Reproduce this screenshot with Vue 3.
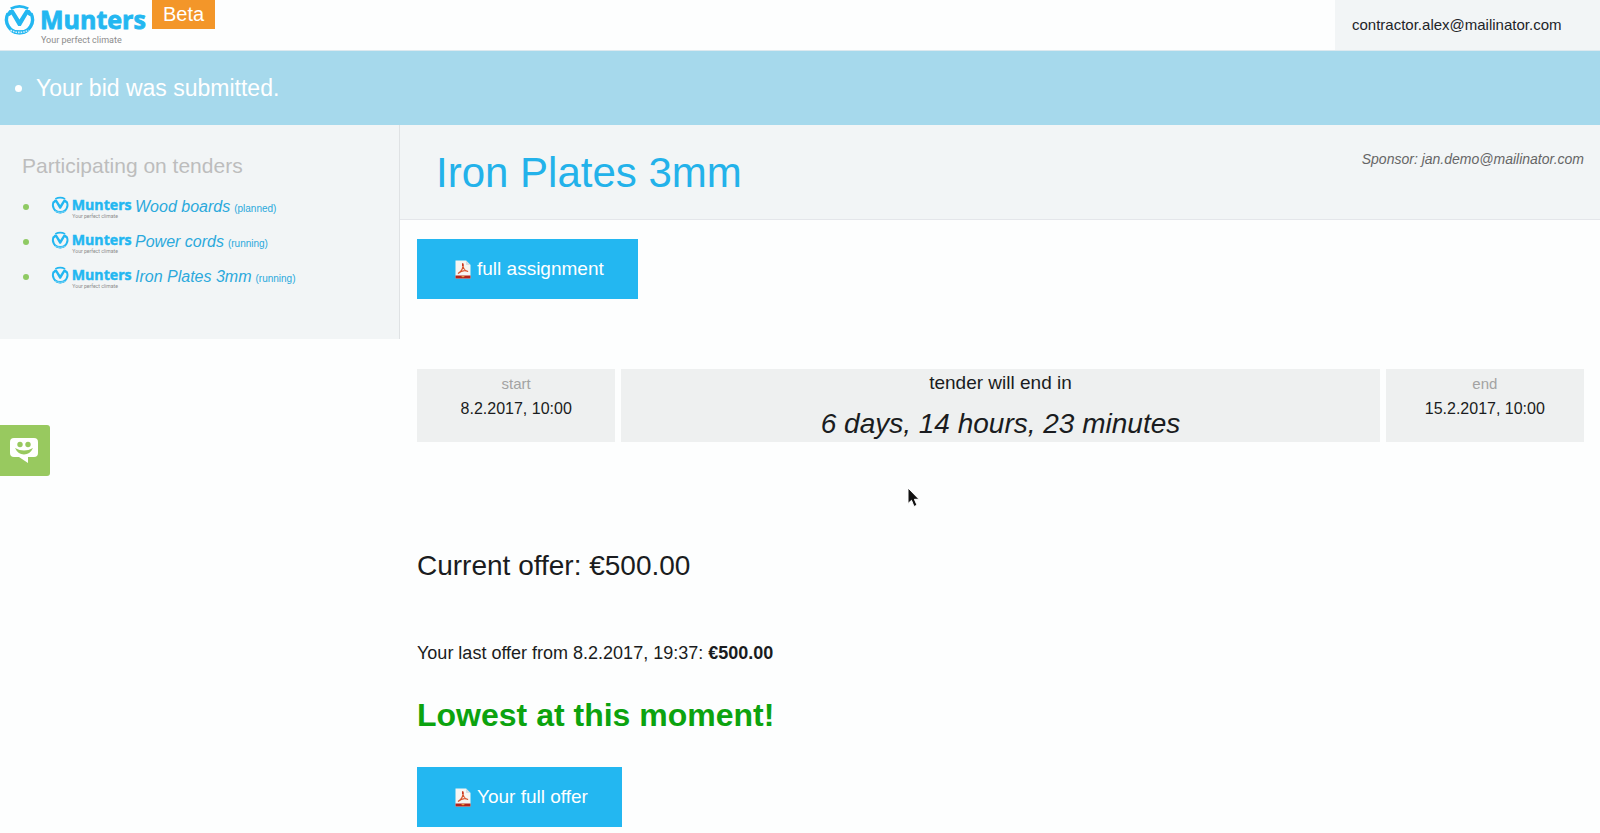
<script setup>
import { h } from 'vue'

const tenders = [
  { name: 'Wood boards', state: 'planned' },
  { name: 'Power cords', state: 'running' },
  { name: 'Iron Plates 3mm', state: 'running' },
]

const MuntersLogo = () =>
  h('svg', { viewBox: '0 0 148 46', role: 'img', 'aria-label': 'Munters' }, [
    h('path', { d: 'M8 13.500A13 13 0 1 0 31 13.500', fill: 'none', stroke: '#23b7f1', 'stroke-width': 3.4 }),
    h('path', { d: 'M8 27.500Q19.500 33 31 27.500L28 32Q19.500 37 11 32Z', fill: '#23b7f1' }),
    h('path', { d: 'M6 14.500L9.500 10H13.500L19.500 19.500L25.500 10H29.500L33 14.500L29.500 16L27.500 14.500L20.800 26H18.200L11.500 14.500L9.500 16Z', fill: '#23b7f1' }),
    h('path', { d: 'M10.500 30.300Q19.500 34.500 28.500 30.300', fill: 'none', stroke: '#d5f0fb', 'stroke-width': 1.6, 'stroke-dasharray': '1.6 1' }),
    h('path', { d: 'M10.800 8.800Q19.500 4 28.200 8.800', fill: 'none', stroke: '#23b7f1', 'stroke-width': 2.8 }),
    h('text', { x: 40, y: 29, fill: '#23b7f1', stroke: '#23b7f1', 'stroke-width': 0.8, 'font-family': 'Open Sans, sans-serif', 'font-weight': 700, 'font-size': 25 }, 'Munters'),
    h('text', { x: 41, y: 43, fill: '#8c8c8c', 'font-family': 'Roboto, sans-serif', 'font-size': 9 }, 'Your perfect climate'),
  ])

const PdfIcon = () =>
  h('svg', { viewBox: '0 0 16 19', 'aria-hidden': 'true' }, [
    h('path', { d: 'M0.500 0.500H11L15.500 5V18.500H0.500Z', fill: '#f7f5f2' }),
    h('path', { d: 'M11 0.500V5H15.500Z', fill: '#d5dde2' }),
    h('path', { d: 'M0.500 15.500H15.500V18.500H0.500Z', fill: '#b5231b' }),
    h('path', { d: 'M7.500 3.500C9.500 7 6 12 3 13.500C6 11 10 10 13 11.500C10 11.500 8 7.500 7.500 3.500Z', fill: 'none', stroke: '#d9532c', 'stroke-width': 1.2 }),
    h('path', { d: 'M7 3.500H8.500V6H7Z', fill: '#c8321f' }),
    h('path', { d: 'M6 16H10L8 17.500Z', fill: '#e8a33d' }),
  ])
</script>

<template>
  <div class="page">
    <header class="topbar">
      <a href="#" class="brand"><MuntersLogo class="brand-logo" /></a>
      <span class="beta">Beta</span>
      <a href="#" class="account">contractor.alex@mailinator.com</a>
    </header>

    <ul class="flash" role="status">
      <li>Your bid was submitted.</li>
    </ul>

    <div class="columns">
      <aside class="sidebar">
        <h2>Participating on tenders</h2>
        <ul>
          <li v-for="t in tenders" :key="t.name">
            <a href="#">
              <MuntersLogo class="mini-logo" />
              <span>
                <em>{{ t.name }}</em>
                <small>({{ t.state }})</small>
              </span>
            </a>
          </li>
        </ul>
      </aside>

      <main>
        <div class="title-bar">
          <h1>Iron Plates 3mm</h1>
          <p class="sponsor">Sponsor: jan.demo@mailinator.com</p>
        </div>
        <div class="content">
          <a href="#" class="button"><PdfIcon class="pdf" />full assignment</a>

          <section class="timeline">
            <div class="edge">
              <span class="label">start</span>
              <span>8.2.2017, 10:00</span>
            </div>
            <div class="remaining">
              <span>tender will end in</span>
              <em>6 days, 14 hours, 23 minutes</em>
            </div>
            <div class="edge">
              <span class="label">end</span>
              <span>15.2.2017, 10:00</span>
            </div>
          </section>

          <p class="current">Current offer: €500.00</p>
          <p class="last">Your last offer from 8.2.2017, 19:37: <strong>€500.00</strong></p>
          <p class="lowest">Lowest at this moment!</p>
          <a href="#" class="button"><PdfIcon class="pdf" />Your full offer</a>
        </div>
      </main>
    </div>

    <button class="chat" type="button" aria-label="Feedback">
      <svg viewBox="0 0 30 27" aria-hidden="true">
        <path d="M5 1H25Q29 1 29 5V16Q29 20 25 20H19V26L10 20H5Q1 20 1 16V5Q1 1 5 1Z" fill="#fff" />
        <circle cx="11" cy="7.500" r="2.700" fill="#98c95f" />
        <circle cx="19" cy="7.500" r="2.700" fill="#98c95f" />
        <path d="M6 11Q15 16 24 11Q21 17.500 15 17.500Q9 17.500 6 11Z" fill="#98c95f" />
      </svg>
    </button>

    <svg class="pointer" viewBox="0 0 14 21" aria-hidden="true">
      <path d="M1 1V16.500L4.500 13.300L7 19.500L10 18.200L7.400 12.300H12Z" fill="#111" stroke="#fff" stroke-width="1" />
    </svg>
  </div>
</template>

<style>
body {
  background: #fdfefe;
}
</style>

<style scoped>
.page {
  position: relative;
  font-family: "Liberation Sans", Arial, sans-serif;
  color: #1a1c20;
}
h1, h2, p, ul {
  margin: 0;
  padding: 0;
  font-weight: 400;
}
a {
  text-decoration: none;
}
.topbar {
  display: flex;
  align-items: flex-start;
  height: 50px;
  border-bottom: 1px solid #dde9ef;
}
.brand-logo {
  display: block;
  width: 148px;
  height: 46px;
}
.beta {
  margin-left: 4px;
  padding: 0 11px;
  font-size: 20px;
  line-height: 29px;
  color: #fff;
  background: #f39629;
}
.account {
  margin-left: auto;
  width: 248px;
  padding-left: 17px;
  font-size: 15px;
  line-height: 50px;
  color: #222428;
  background: #f2f5f6;
}
.flash {
  padding: 0 36px;
  font-size: 23px;
  line-height: 74px;
  color: #fff;
  background: #a6d9ec;
}
.columns {
  display: grid;
  grid-template-columns: 1fr 3fr;
  align-items: start;
}
.sidebar {
  padding: 28px 22px 45px;
  background: #f2f5f6;
  border-right: 1px solid #dfe2e4;
}
.sidebar h2 {
  margin-bottom: 10px;
  font-size: 21px;
  line-height: 26px;
  color: #bdbdbd;
}
.sidebar ul {
  list-style: none;
}
.sidebar li {
  display: flex;
  align-items: center;
  height: 35px;
}
.sidebar li::before {
  content: "";
  width: 6px;
  height: 6px;
  margin: 0 20px 0 1px;
  border-radius: 50%;
  background: #8fca63;
}
.sidebar li a {
  display: flex;
  align-items: center;
  gap: 2px;
  color: #2ba9dc;
}
.mini-logo {
  width: 84px;
  height: 26px;
}
.sidebar em {
  font-size: 16px;
}
.sidebar small {
  margin-left: 4px;
  font-size: 10px;
}
.title-bar {
  display: flex;
  justify-content: space-between;
  align-items: flex-start;
  padding: 24px 16px 22px 36px;
  background: #f2f5f6;
  border-bottom: 1px solid #e4e6ea;
}
h1 {
  font-size: 42px;
  line-height: 48px;
  color: #23b2ea;
}
.sponsor {
  font-size: 14px;
  line-height: 20px;
  font-style: italic;
  color: #666;
}
.content {
  padding: 19px 16px 6px 17px;
}
.button {
  display: flex;
  align-items: center;
  width: fit-content;
  height: 60px;
  padding: 0 34px 0 38px;
  font-size: 19px;
  color: #fff;
  background: #23b7f1;
}
.pdf {
  width: 16px;
  height: 19px;
  margin-right: 6px;
}
.timeline {
  display: flex;
  gap: 6px;
  margin: 70px 0 104px;
  text-align: center;
}
.timeline > div {
  display: flex;
  flex-direction: column;
  height: 73px;
  background: #eef0f0;
}
.edge {
  width: 17%;
  font-size: 16px;
  line-height: 20px;
  padding-top: 5px;
  gap: 5px;
  box-sizing: border-box;
}
.label {
  font-size: 15px;
  color: #a3a3a3;
}
.remaining {
  flex: 1;
  font-size: 19px;
  line-height: 28px;
}
.remaining em {
  font-size: 28px;
  line-height: 54px;
}
.current {
  margin-bottom: 54px;
  font-size: 28px;
  line-height: 40px;
}
.last {
  margin-bottom: 29px;
  font-size: 18px;
  line-height: 26px;
}
.lowest {
  margin-bottom: 32px;
  font-size: 32px;
  line-height: 40px;
  font-weight: 700;
  color: #0ca30f;
}
.chat {
  position: fixed;
  left: 0;
  top: 425px;
  display: flex;
  align-items: center;
  justify-content: center;
  width: 50px;
  height: 51px;
  padding: 0 2px 0 0;
  border: 0;
  border-radius: 0 3px 3px 0;
  background: #98c95f;
}
.chat svg {
  width: 30px;
  height: 27px;
}
.pointer {
  position: absolute;
  left: 907px;
  top: 487px;
  width: 14px;
  height: 21px;
}
</style>
